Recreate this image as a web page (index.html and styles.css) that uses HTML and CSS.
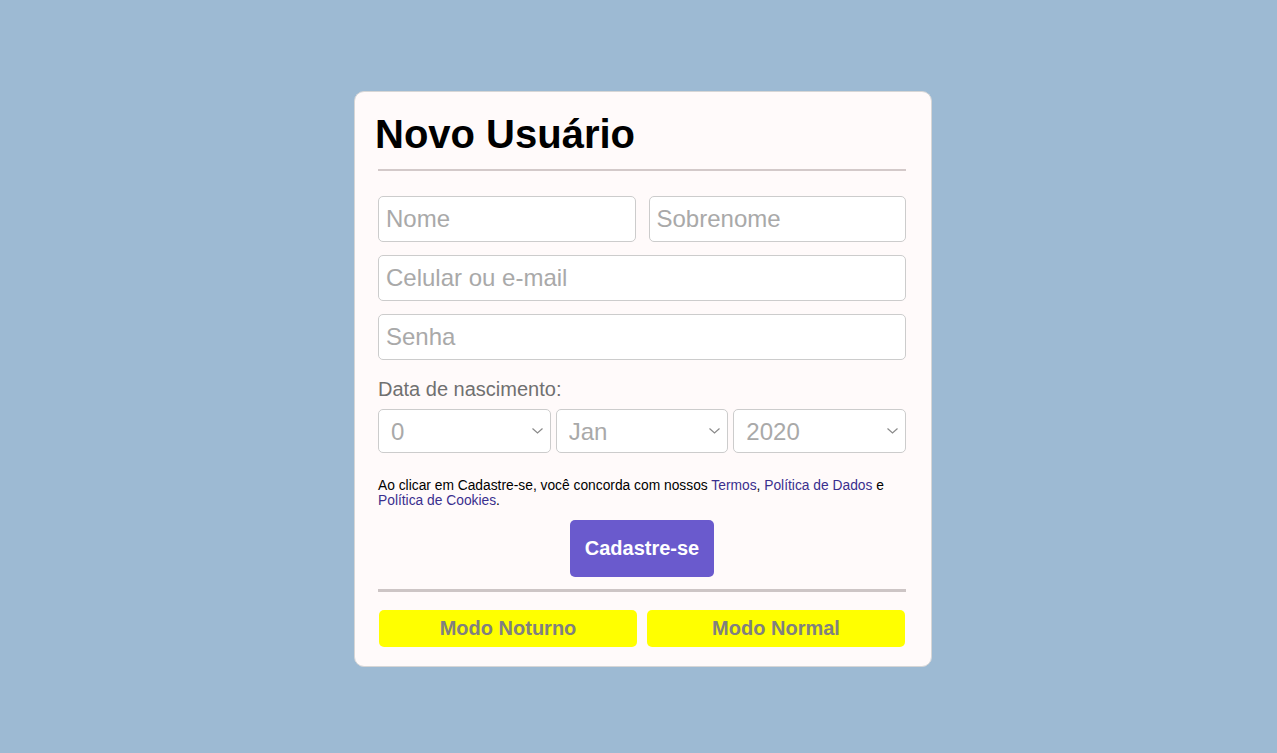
FILE: index.html
```html
<!DOCTYPE html>
<html lang="pt-BR">
<head>
<meta charset="utf-8">
<title>Novo Usuário</title>
<link rel="stylesheet" href="styles.css">
</head>
<body>
<main class="page">
  <form class="card">
    <h1 class="title">Novo Usuário</h1>
    <hr class="rule">
    <div class="row row-first">
      <input class="field" type="text" placeholder="Nome">
      <input class="field" type="text" placeholder="Sobrenome">
    </div>
    <div class="row">
      <input class="field" type="text" placeholder="Celular ou e-mail">
    </div>
    <div class="row">
      <input class="field" type="password" placeholder="Senha">
    </div>
    <label class="label">Data de nascimento:</label>
    <div class="dates">
      <div class="select-wrap">
        <select class="select"><option>0</option></select>
        <svg class="chev" width="11" height="6" viewBox="0 0 11 6"><path d="M0.5 0.5 L5.5 5 L10.5 0.5" fill="none" stroke="#8a8a8a" stroke-width="1.2"/></svg>
      </div>
      <div class="select-wrap">
        <select class="select"><option>Jan</option></select>
        <svg class="chev" width="11" height="6" viewBox="0 0 11 6"><path d="M0.5 0.5 L5.5 5 L10.5 0.5" fill="none" stroke="#8a8a8a" stroke-width="1.2"/></svg>
      </div>
      <div class="select-wrap">
        <select class="select"><option>2020</option></select>
        <svg class="chev" width="11" height="6" viewBox="0 0 11 6"><path d="M0.5 0.5 L5.5 5 L10.5 0.5" fill="none" stroke="#8a8a8a" stroke-width="1.2"/></svg>
      </div>
    </div>
    <p class="terms">Ao clicar em Cadastre-se, você concorda com nossos <a class="link" href="#">Termos</a>, <a class="link" href="#">Política de Dados</a> e <a class="link" href="#">Política de Cookies</a>.</p>
    <div class="submit-row">
      <button class="submit" type="button">Cadastre-se</button>
    </div>
    <hr class="rule rule-thick">
    <div class="modes">
      <button class="mode" type="button">Modo Noturno</button>
      <button class="mode" type="button">Modo Normal</button>
    </div>
  </form>
</main>
</body>
</html>
```

FILE: styles.css
```css
html, body {
  margin: 0;
  padding: 0;
}
body {
  background: #9dbad3;
  font-family: "Liberation Sans", Arial, sans-serif;
  min-height: 753px;
}
.page {
  display: flex;
  justify-content: center;
  padding-top: 91px;
}
.card {
  box-sizing: border-box;
  width: 578px;
  height: 576px;
  margin-left: 9px;
  background: #fffafa;
  border: 1px solid #d6d6d6;
  border-radius: 10px;
  padding: 19px 25px 0 23px;
}
.title {
  margin: 0 0 0 -3px;
  font-size: 40px;
  font-weight: bold;
  line-height: 46px;
  color: #000;
}
.rule {
  margin: 12px 0 0 0;
  border: 0;
  height: 2px;
  background: #d3c9c9;
}
.row {
  display: flex;
  gap: 13px;
  margin-top: 13px;
}
.row-first {
  margin-top: 25px;
}
.field {
  flex: 1;
  min-width: 0;
  box-sizing: border-box;
  height: 46px;
  border: 1px solid #cccccc;
  border-radius: 5px;
  background: #fff;
  padding: 0 7px;
  font-family: "Liberation Sans", Arial, sans-serif;
  font-size: 24px;
  color: #333;
}
.field::placeholder {
  color: #a9a9a9;
}
.label {
  display: block;
  margin-top: 18px;
  font-size: 20px;
  line-height: 23px;
  color: #707070;
}
.dates {
  display: flex;
  gap: 5px;
  margin-top: 8px;
}
.select-wrap {
  position: relative;
  flex: 1;
}
.select {
  appearance: none;
  -webkit-appearance: none;
  width: 100%;
  box-sizing: border-box;
  height: 44px;
  border: 1px solid #cccccc;
  border-radius: 5px;
  background: #fff;
  padding: 0 10px 0 12px;
  font-family: "Liberation Sans", Arial, sans-serif;
  font-size: 24px;
  color: #a9a9a9;
}
.chev {
  position: absolute;
  right: 8px;
  top: 19px;
}
.terms {
  margin: 25px 0 0 0;
  font-size: 13.8px;
  line-height: 15px;
  color: #000;
}
.link {
  color: #3a2f8e;
  text-decoration: none;
}
.submit-row {
  display: flex;
  justify-content: center;
  margin-top: 12px;
}
.submit {
  height: 57px;
  padding: 0 15px;
  border: 0;
  border-radius: 5px;
  background: #6a5acd;
  color: #fff;
  font-family: "Liberation Sans", Arial, sans-serif;
  font-size: 20px;
  font-weight: bold;
}
.rule-thick {
  height: 3px;
  margin-top: 12px;
  background: #cdc5c5;
}
.modes {
  display: flex;
  gap: 10px;
  margin-top: 18px;
  padding: 0 1px;
}
.mode {
  flex: 1;
  height: 37px;
  border: 0;
  border-radius: 5px;
  background: #ffff00;
  color: #808080;
  font-family: "Liberation Sans", Arial, sans-serif;
  font-size: 20px;
  font-weight: bold;
}
```
